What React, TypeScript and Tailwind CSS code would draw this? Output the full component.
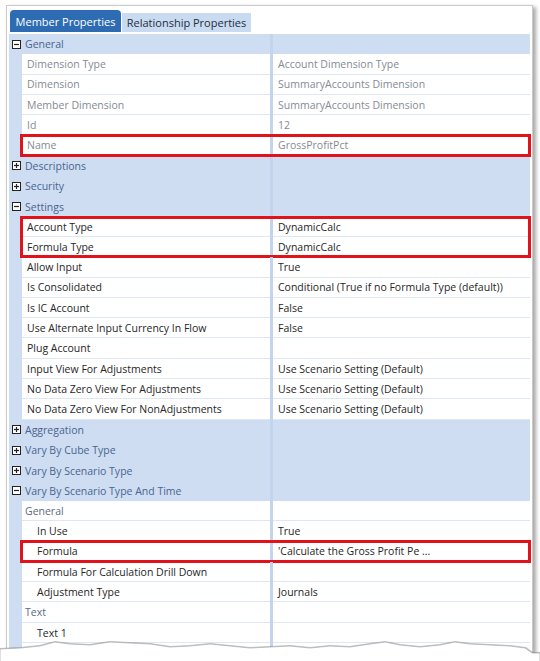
import React from "react";

type Row =
  | { kind: "cat"; label: string; open: boolean }
  | { kind: "sub"; label: string }
  | {
      kind: "prop";
      label: string;
      value?: string;
      muted?: boolean;
      indent?: boolean;
      box?: "single" | "top" | "bottom";
    };

const rows: Row[] = [
  { kind: "cat", label: "General", open: true },
  { kind: "prop", label: "Dimension Type", value: "Account Dimension Type", muted: true },
  { kind: "prop", label: "Dimension", value: "SummaryAccounts Dimension", muted: true },
  { kind: "prop", label: "Member Dimension", value: "SummaryAccounts Dimension", muted: true },
  { kind: "prop", label: "Id", value: "12", muted: true },
  { kind: "prop", label: "Name", value: "GrossProfitPct", muted: true, box: "single" },
  { kind: "cat", label: "Descriptions", open: false },
  { kind: "cat", label: "Security", open: false },
  { kind: "cat", label: "Settings", open: true },
  { kind: "prop", label: "Account Type", value: "DynamicCalc", box: "top" },
  { kind: "prop", label: "Formula Type", value: "DynamicCalc", box: "bottom" },
  { kind: "prop", label: "Allow Input", value: "True" },
  { kind: "prop", label: "Is Consolidated", value: "Conditional (True if no Formula Type (default))" },
  { kind: "prop", label: "Is IC Account", value: "False" },
  { kind: "prop", label: "Use Alternate Input Currency In Flow", value: "False" },
  { kind: "prop", label: "Plug Account" },
  { kind: "prop", label: "Input View For Adjustments", value: "Use Scenario Setting (Default)" },
  { kind: "prop", label: "No Data Zero View For Adjustments", value: "Use Scenario Setting (Default)" },
  { kind: "prop", label: "No Data Zero View For NonAdjustments", value: "Use Scenario Setting (Default)" },
  { kind: "cat", label: "Aggregation", open: false },
  { kind: "cat", label: "Vary By Cube Type", open: false },
  { kind: "cat", label: "Vary By Scenario Type", open: false },
  { kind: "cat", label: "Vary By Scenario Type And Time", open: true },
  { kind: "sub", label: "General" },
  { kind: "prop", label: "In Use", value: "True", indent: true },
  { kind: "prop", label: "Formula", value: "'Calculate the Gross Profit Pe ...", indent: true, box: "single" },
  { kind: "prop", label: "Formula For Calculation Drill Down", indent: true },
  { kind: "prop", label: "Adjustment Type", value: "Journals", indent: true },
  { kind: "sub", label: "Text" },
  { kind: "prop", label: "Text 1", indent: true },
  { kind: "prop", label: "Text 2", indent: true },
];

function Toggle({ open }: { open: boolean }) {
  return (
    <svg width="9" height="9" viewBox="0 0 9 9" className="block">
      <rect x="0.5" y="0.5" width="8" height="8" fill="white" stroke="#222" />
      <path d="M2 4.5h5" stroke="#222" strokeWidth="1.2" />
      {!open && <path d="M4.5 2v5" stroke="#222" strokeWidth="1.2" />}
    </svg>
  );
}

function RedBox({ box }: { box: "single" | "top" | "bottom" }) {
  const edges =
    box === "single"
      ? "border-[3px] top-[-1px] bottom-[-1px]"
      : box === "top"
      ? "border-[3px] border-b-0 top-[-1px] bottom-0"
      : "border-[3px] border-t-0 top-0 bottom-[-1px]";
  return (
    <div
      className={`pointer-events-none absolute left-[-2px] right-[-1px] border-[#e1121a] ${edges}`}
    />
  );
}

function GridRow({ row }: { row: Row }) {
  if (row.kind === "cat") {
    return (
      <div className="flex h-[20.3px] items-center bg-[#cfddf2]">
        <div className="flex w-[13px] shrink-0 justify-center pl-[1px]">
          <Toggle open={row.open} />
        </div>
        <div className="w-[248px] shrink-0 pl-[3px] pt-[1px] text-[#48658f]">{row.label}</div>
        <div className="h-full w-[3px] shrink-0 bg-[#c4d4ec]" />
        <div className="flex-1" />
      </div>
    );
  }
  if (row.kind === "sub") {
    return (
      <div className="flex h-[20.3px]">
        <div className="w-[13px] shrink-0 bg-[#cfddf2]" />
        <div className="flex w-[248px] shrink-0 items-center border-b border-[#dfe7f3] pl-[3px] pt-[1px] text-[#5b6b80]">
          {row.label}
        </div>
        <div className="h-full w-[3px] shrink-0 bg-[#c4d4ec]" />
        <div className="flex-1 border-b border-[#dfe7f3]" />
      </div>
    );
  }
  const tone = row.muted ? "text-[#858b93]" : "text-[#262626]";
  return (
    <div className="flex h-[20.3px]">
      <div className="w-[13px] shrink-0 bg-[#cfddf2]" />
      <div className="relative flex flex-1">
        <div
          className={`flex w-[248px] shrink-0 items-center truncate border-b border-[#dfe7f3] pt-[1px] ${
            row.indent ? "pl-[15px]" : "pl-[5px]"
          } ${tone}`}
        >
          {row.label}
        </div>
        <div className="h-full w-[3px] shrink-0 bg-[#c4d4ec]" />
        <div className={`flex flex-1 items-center truncate border-b border-[#dfe7f3] pl-[5px] pt-[1px] ${tone}`}>
          {row.value}
        </div>
        {row.box && <RedBox box={row.box} />}
      </div>
    </div>
  );
}

// jagged tear along the bottom of the snapshot
const tear =
  "0,18 20,17 40,15 55,11 70,13 90,14 110,11 130,12 150,13 170,16 190,15 210,13 230,15 250,17 270,16 290,15 310,17 330,15 350,16 370,13 385,11 400,14 420,16 440,14 455,11 470,13 490,14 510,15 525,17 532,22 540,22";

export default function App() {
  return (
    <div
      className="relative h-[661px] w-[540px] overflow-hidden bg-white text-[10.5px] leading-none"
      style={{ fontFamily: '"Segoe UI", "Open Sans", sans-serif' }}
    >
      <div className="ml-[6px] mt-[5px] h-[700px] w-[527px] border border-[#cacaca] bg-white px-[2px] pt-[4px] shadow-[3px_2px_4px_rgba(0,0,0,0.35)]">
        {/* tab strip */}
        <div className="flex h-[22px] items-end gap-[1px] pl-[1px]">
          <div className="flex h-[22px] w-[111px] items-center justify-center whitespace-nowrap rounded-t-[4px] bg-[#2d6cb2] text-[11px] text-white">
            Member Properties
          </div>
          <div className="flex h-[19px] w-[129px] items-center justify-center whitespace-nowrap bg-[#c9dbf1] text-[11px] text-[#1f2d3d]">
            Relationship Properties
          </div>
        </div>

        {/* property grid */}
        <div className="mt-[2px] flex flex-col">
          {rows.map((r, i) => (
            <GridRow key={i} row={r} />
          ))}
        </div>
      </div>

      <svg
        className="absolute bottom-0 left-0"
        width="540"
        height="31"
        viewBox="0 0 540 31"
      >
        <polyline points={tear} fill="none" stroke="rgba(0,0,0,0.22)" strokeWidth="6" transform="translate(0,3)" />
        <polygon points={`${tear} 540,31 0,31`} fill="white" stroke="#b0b0b0" strokeWidth="0.8" transform="translate(0,1)" />
      </svg>
    </div>
  );
}
